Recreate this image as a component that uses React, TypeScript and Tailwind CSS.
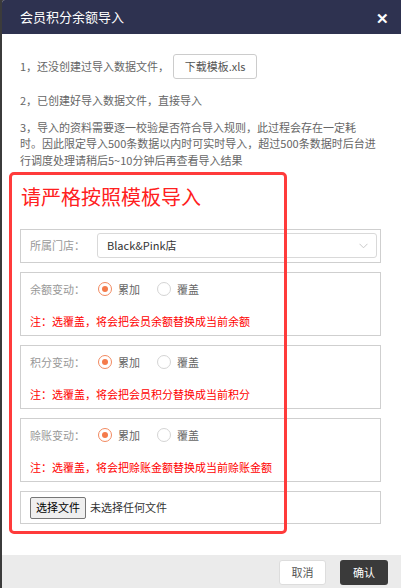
import React, { useState } from 'react';

type Mode = 'add' | 'cover';

const Radio: React.FC<{ checked: boolean; label: string; onClick: () => void }> = ({ checked, label, onClick }) => (
  <button type="button" onClick={onClick} className="flex items-center gap-[6px]">
    <span
      className={`flex h-[14px] w-[14px] items-center justify-center rounded-full border ${
        checked ? 'border-[#f2895f]' : 'border-[#d4d4d4]'
      }`}
    >
      {checked && <span className="h-[6px] w-[6px] rounded-full bg-[#f47b4b]"></span>}
    </span>
    <span className="text-[11px] leading-[16px] text-[#666]">{label}</span>
  </button>
);

const ChangeRow: React.FC<{ label: string; note: string }> = ({ label, note }) => {
  const [mode, setMode] = useState<Mode>('add');
  return (
    <div className="border border-[#cfcfcf] pl-[9px] pt-[8px] pb-[6px]">
      <div className="flex h-[16px] items-center">
        <span className="w-[68px] text-[11px] text-[#999]">{label}</span>
        <div className="flex items-center gap-[17px]">
          <Radio checked={mode === 'add'} label="累加" onClick={() => setMode('add')} />
          <Radio checked={mode === 'cover'} label="覆盖" onClick={() => setMode('cover')} />
        </div>
      </div>
      <p className="mt-[16px] h-[16px] text-[11px] leading-[16px] text-[#ff0000]">{note}</p>
    </div>
  );
};

const App: React.FC = () => {
  return (
    <div
      className="h-[588px] w-[401px] overflow-hidden bg-[#3b3b3b] pl-[2px]"
      style={{ fontFamily: '"Noto Sans CJK SC", "Noto Sans", sans-serif' }}
    >
      <div className="flex h-full flex-col overflow-hidden rounded-tl-[3px] bg-white">
        {/* Header */}
        <div className="flex h-[34px] shrink-0 items-center justify-between bg-[#2e3250] pl-[18px] pr-[12px]">
          <h1 className="text-[13px] text-white">会员积分余额导入</h1>
          <button className="text-[15px] font-bold leading-none text-white">✕</button>
        </div>

        {/* Body */}
        <div className="relative flex-1 pl-[18px] pr-[20px] pt-[20px]">
          <div className="flex h-[25px] items-center text-[11px] text-[#666]">
            <span>1，还没创建过导入数据文件，</span>
            <button className="ml-[4px] h-[25px] w-[84px] rounded-[3px] border border-[#ccc] bg-white text-[11px] text-[#555]">
              下载模板.xls
            </button>
          </div>
          <p className="mt-[13px] text-[11px] leading-[16.5px] text-[#666]">2，已创建好导入数据文件，直接导入</p>
          <p className="mt-[10px] w-[357px] text-[11px] leading-[16.5px] text-[#666]">
            3，导入的资料需要逐一校验是否符合导入规则，此过程会存在一定耗时。因此限定导入500条数据以内时可实时导入，超过500条数据时后台进行调度处理请稍后5~10分钟后再查看导入结果
          </p>

          <h2 className="mt-[15px] pl-[1px] text-[20px] leading-[28px] text-[#ff2020]">请严格按照模板导入</h2>

          <div className="mt-[18px] flex flex-col gap-[9px]">
            {/* Store */}
            <div className="flex items-center border border-[#cfcfcf] pl-[9px] pr-[3px] pt-[3px] pb-[4px]">
              <span className="w-[67px] text-[11px] text-[#999]">所属门店：</span>
              <div className="flex h-[25px] flex-1 items-center justify-between rounded-[3px] border border-[#d9d9d9] pl-[9px] pr-[8px]">
                <span className="text-[11px] text-[#333]">Black&amp;Pink店</span>
                <svg width="9" height="6" viewBox="0 0 9 6" fill="none">
                  <path d="M0.5 0.8 L4.5 4.8 L8.5 0.8" stroke="#c8c8c8" strokeWidth="1" />
                </svg>
              </div>
            </div>

            <ChangeRow label="余额变动：" note="注：选覆盖，将会把会员余额替换成当前余额" />
            <ChangeRow label="积分变动：" note="注：选覆盖，将会把会员积分替换成当前积分" />
            <ChangeRow label="赊账变动：" note="注：选覆盖，将会把赊账金额替换成当前赊账金额" />

            {/* File */}
            <div className="flex h-[33px] items-center border border-[#cfcfcf] pl-[9px]">
              <button className="h-[22px] w-[56px] rounded-[2px] border border-[#767676] bg-[#efefef] text-[11px] text-black">
                选择文件
              </button>
              <span className="ml-[4px] text-[11px] text-[#333]">未选择任何文件</span>
            </div>
          </div>

          {/* Annotation frame */}
          <div className="pointer-events-none absolute left-[7px] top-[138px] h-[362px] w-[278px] rounded-[5px] border-[3px] border-[#ff3b3b]"></div>
        </div>

        {/* Footer */}
        <div className="flex h-[33px] shrink-0 items-start justify-end gap-[14px] bg-[#ebebeb] pr-[13px] pt-[5px]">
          <button className="h-[25px] w-[47px] rounded-[3px] border border-[#ddd] bg-white text-[11px] text-[#555]">取消</button>
          <button className="h-[25px] w-[48px] rounded-[3px] bg-[#3a3a3a] text-[11px] text-white">确认</button>
        </div>
      </div>
    </div>
  );
};

export default App;
